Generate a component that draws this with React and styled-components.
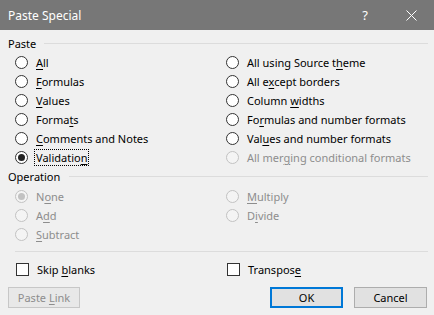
import React from 'react';
import styled, { createGlobalStyle, css } from 'styled-components';

const GlobalStyle = createGlobalStyle`
	html, body {
		margin: 0;
		padding: 0;
		background: #f0f0f0;
	}
	body {
		font-family: 'Noto Sans', 'Open Sans', sans-serif;
		font-size: 11px;
		color: #000;
	}
`;

const Dialog = styled.div`
	width: 434px;
	height: 315px;
	background: #f0f0f0;
	overflow: hidden;
`;

const TitleBar = styled.header`
	height: 30px;
	background: #777777;
	color: #fff;
	display: flex;
	align-items: center;
	padding-left: 8px;
`;

const Title = styled.h1`
	margin: 0;
	flex: 1;
	font-size: 12px;
	font-weight: normal;
`;

const TitleButton = styled.div`
	width: 46px;
	height: 30px;
	display: flex;
	align-items: center;
	justify-content: center;
	font-size: 13px;
`;

const Body = styled.div`
	padding: 4px 6px 0 8px;
`;

const GroupHeader = styled.div`
	height: 19px;
	display: flex;
	align-items: center;

	&::after {
		content: '';
		flex: 1;
		height: 1px;
		background: #dcdcdc;
		margin-left: ${(p) => p.gap}px;
	}
`;

const OptionGrid = styled.div`
	display: grid;
	grid-template-columns: 211px 211px;
	grid-template-rows: repeat(${(p) => p.rows}, 19px);
	grid-auto-flow: column;
	padding-left: 7px;
	margin-top: ${(p) => p.top || 0}px;
`;

const Option = styled.label`
	display: flex;
	align-items: center;
	gap: 7px;
	color: ${(p) => (p.disabled ? '#8d8d8d' : '#000')};
	white-space: nowrap;
`;

const Radio = styled.span`
	box-sizing: border-box;
	width: 13px;
	height: 13px;
	border-radius: 50%;
	border: 1px solid ${(p) => (p.disabled ? '#c2c2c2' : '#333')};
	background: ${(p) => (p.disabled ? '#f4f4f4' : '#fff')};
	display: flex;
	align-items: center;
	justify-content: center;
	flex-shrink: 0;

	${(p) =>
		p.checked &&
		css`
			&::after {
				content: '';
				width: 7px;
				height: 7px;
				border-radius: 50%;
				background: ${p.disabled ? '#c2c2c2' : '#222'};
			}
		`};
`;

const Check = styled.span`
	box-sizing: border-box;
	width: 13px;
	height: 13px;
	border: 1px solid #333;
	background: #fff;
	flex-shrink: 0;
`;

const Text = styled.span`
	line-height: 15px;
	padding: 0 1px;
	margin-left: -1px;
	border: 1px solid transparent;

	${(p) =>
		p.focused &&
		css`
			border: 1px dotted #000;
		`};
`;

const Key = styled.u`
	text-decoration: underline;
	text-underline-offset: 2px;
`;

const Separator = styled.hr`
	border: 0;
	height: 1px;
	background: #dcdcdc;
	margin: 7px 0 0 7px;
`;

const CheckRow = styled.div`
	display: grid;
	grid-template-columns: 211px 211px;
	height: 19px;
	margin-top: 8px;
	padding-left: 8px;
`;

const Footer = styled.div`
	display: flex;
	align-items: center;
	gap: 11px;
	margin-top: 8px;
	padding-right: 1px;
`;

const Button = styled.button`
	box-sizing: border-box;
	height: 21px;
	width: 73px;
	font: inherit;
	background: #e1e1e1;
	border: 1px solid #adadad;
	color: #000;
	padding: 0;

	${(p) =>
		p.primary &&
		css`
			border: 2px solid #0078d7;
		`};

	${(p) =>
		p.disabled &&
		css`
			width: 72px;
			background: #e8e8e8;
			border-color: #c7c7c7;
			color: #8d8d8d;
		`};
`;

const Spacer = styled.div`
	flex: 1;
`;

// "&" marks the access key letter
function Label({ text }) {
	const i = text.indexOf('&');
	if (i < 0) return text;
	return (
		<>
			{text.slice(0, i)}
			<Key>{text[i + 1]}</Key>
			{text.slice(i + 2)}
		</>
	);
}

const pasteOptions = [
	{ label: '&All' },
	{ label: '&Formulas' },
	{ label: '&Values' },
	{ label: 'Forma&ts' },
	{ label: '&Comments and Notes' },
	{ label: 'Validatio&n', checked: true, focused: true },
	{ label: 'All using Source t&heme' },
	{ label: 'All e&xcept borders' },
	{ label: 'Column &widths' },
	{ label: 'Fo&rmulas and number formats' },
	{ label: 'Val&ues and number formats' },
	{ label: 'All mer&ging conditional formats', disabled: true },
];

const operationOptions = [
	{ label: 'N&one', checked: true },
	{ label: 'A&dd' },
	{ label: '&Subtract' },
	{ label: '&Multiply' },
	{ label: 'D&ivide' },
];

function RadioOption({ label, checked, disabled, focused }) {
	return (
		<Option disabled={disabled}>
			<Radio checked={checked} disabled={disabled} />
			<Text focused={focused}>
				<Label text={label} />
			</Text>
		</Option>
	);
}

function CloseIcon() {
	return (
		<svg width="11" height="11" viewBox="0 0 11 11">
			<path d="M0.5 0.5 L10.5 10.5 M10.5 0.5 L0.5 10.5" stroke="#fff" strokeWidth="1" />
		</svg>
	);
}

export default function App() {
	return (
		<Dialog>
			<GlobalStyle />
			<TitleBar>
				<Title>Paste Special</Title>
				<TitleButton>?</TitleButton>
				<TitleButton>
					<CloseIcon />
				</TitleButton>
			</TitleBar>
			<Body>
				<GroupHeader gap={8}>Paste</GroupHeader>
				<OptionGrid rows={6}>
					{pasteOptions.map((o) => (
						<RadioOption key={o.label} {...o} />
					))}
				</OptionGrid>
				<GroupHeader gap={9}>Operation</GroupHeader>
				<OptionGrid rows={3} top={1}>
					{operationOptions.map((o) => (
						<RadioOption key={o.label} {...o} disabled />
					))}
				</OptionGrid>
				<Separator />
				<CheckRow>
					<Option>
						<Check />
						<Text>
							<Label text="Skip &blanks" />
						</Text>
					</Option>
					<Option>
						<Check />
						<Text>
							<Label text="Transpos&e" />
						</Text>
					</Option>
				</CheckRow>
				<Footer>
					<Button disabled>
						<Label text="Paste &Link" />
					</Button>
					<Spacer />
					<Button primary>OK</Button>
					<Button>Cancel</Button>
				</Footer>
			</Body>
		</Dialog>
	);
}
